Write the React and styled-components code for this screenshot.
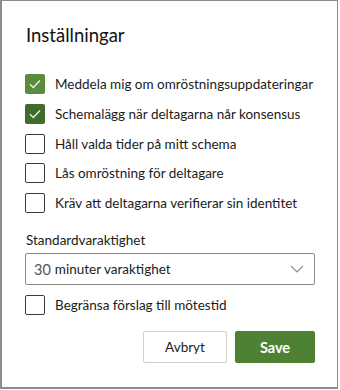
import React, { useState } from "react";
import styled, { createGlobalStyle } from "styled-components";

const Global = createGlobalStyle`
  html, body { margin: 0; padding: 0; background: #ffffff; }
  body { font-family: "Segoe UI", Lato, "Noto Sans", sans-serif; }
`;

const Frame = styled.div`
  box-sizing: border-box;
  width: 338px;
  height: 389px;
  border: 1px solid #8c8c8c;
  border-left-width: 2px;
  border-bottom-width: 2px;
  padding: 0 22px 0 23px;
  display: flex;
  flex-direction: column;
  color: #1b1b1b;
`;

const Title = styled.h1`
  margin: 20px 0 0 1px;
  font-size: 18.5px;
  line-height: 28px;
  font-weight: 400;
  color: #111;
`;

const List = styled.div`
  margin-top: 25px;
  display: flex;
  flex-direction: column;
  gap: 9.75px;
`;

const Row = styled.label`
  display: flex;
  align-items: center;
  gap: 10px;
  height: 20px;
  font-size: 13.5px;
  white-space: nowrap;
  color: #1b1b1b;
  cursor: pointer;
`;

const Box = styled.span`
  box-sizing: border-box;
  width: 20px;
  height: 20px;
  flex: none;
  border-radius: 2px;
  border: ${(p) => (p.$checked ? "none" : "1px solid #3b3b3b")};
  background: ${(p) => (p.$checked ? p.$tone : "#fff")};
  display: flex;
  align-items: center;
  justify-content: center;
`;

const FieldLabel = styled.div`
  margin: 19px 0 0 1px;
  font-size: 13.5px;
  line-height: 16px;
  color: #1b1b1b;
`;

const Select = styled.div`
  box-sizing: border-box;
  margin-top: 5px;
  height: 32px;
  width: 290px;
  border: 1px solid #8a8a8a;
  border-radius: 2px;
  display: flex;
  align-items: center;
  padding: 0 10px 0 8px;
  font-size: 13.5px;
`;

const Num = styled.span`
  color: #555;
  font-size: 14.5px;
  margin-right: 4px;
`;

const SelectText = styled.span`
  flex: 1;
  color: #1b1b1b;
`;

const LastList = styled(List)`
  margin-top: 10px;
`;

const Actions = styled.div`
  margin-top: 16px;
  display: flex;
  justify-content: flex-end;
  gap: 8px;
`;

const Button = styled.button`
  box-sizing: border-box;
  height: 32px;
  width: ${(p) => (p.$primary ? "80px" : "84px")};
  border-radius: 2px;
  border: 1px solid ${(p) => (p.$primary ? "#4f8135" : "#d0d0d0")};
  background: ${(p) => (p.$primary ? "#4f8135" : "#fff")};
  color: ${(p) => (p.$primary ? "#fff" : "#1b1b1b")};
  font-family: inherit;
  font-size: ${(p) => (p.$primary ? "14.5px" : "13.5px")};
  font-weight: ${(p) => (p.$primary ? 700 : 400)};
  cursor: pointer;
`;

const Check = () => (
  <svg width="12" height="10" viewBox="0 0 12 10">
    <path d="M1 5.2 L4.3 8.4 L11 1.6" fill="none" stroke="#e8f0e2" strokeWidth="1.4" />
  </svg>
);

const Chevron = () => (
  <svg width="14" height="8" viewBox="0 0 14 8">
    <path d="M1 1 L7 7 L13 1" fill="none" stroke="#8a8a8a" strokeWidth="1.1" />
  </svg>
);

const Option = ({ checked, tone, children }) => (
  <Row>
    <Box $checked={checked} $tone={tone}>{checked && <Check />}</Box>
    <span>{children}</span>
  </Row>
);

export default function App() {
  const [opts] = useState([
    { t: "Meddela mig om omröstningsuppdateringar", c: true, tone: "#5b8c3e" },
    { t: "Schemalägg när deltagarna når konsensus", c: true, tone: "#3f6b2b" },
    { t: "Håll valda tider på mitt schema", c: false },
    { t: "Lås omröstning för deltagare", c: false },
    { t: "Kräv att deltagarna verifierar sin identitet", c: false },
  ]);
  return (
    <>
      <Global />
      <Frame>
        <Title>Inställningar</Title>
        <List>
          {opts.map((o) => (
            <Option key={o.t} checked={o.c} tone={o.tone}>{o.t}</Option>
          ))}
        </List>
        <FieldLabel>Standardvaraktighet</FieldLabel>
        <Select>
          <Num>30</Num>
          <SelectText>minuter varaktighet</SelectText>
          <Chevron />
        </Select>
        <LastList>
          <Option checked={false}>Begränsa förslag till mötestid</Option>
        </LastList>
        <Actions>
          <Button>Avbryt</Button>
          <Button $primary>Save</Button>
        </Actions>
      </Frame>
    </>
  );
}
